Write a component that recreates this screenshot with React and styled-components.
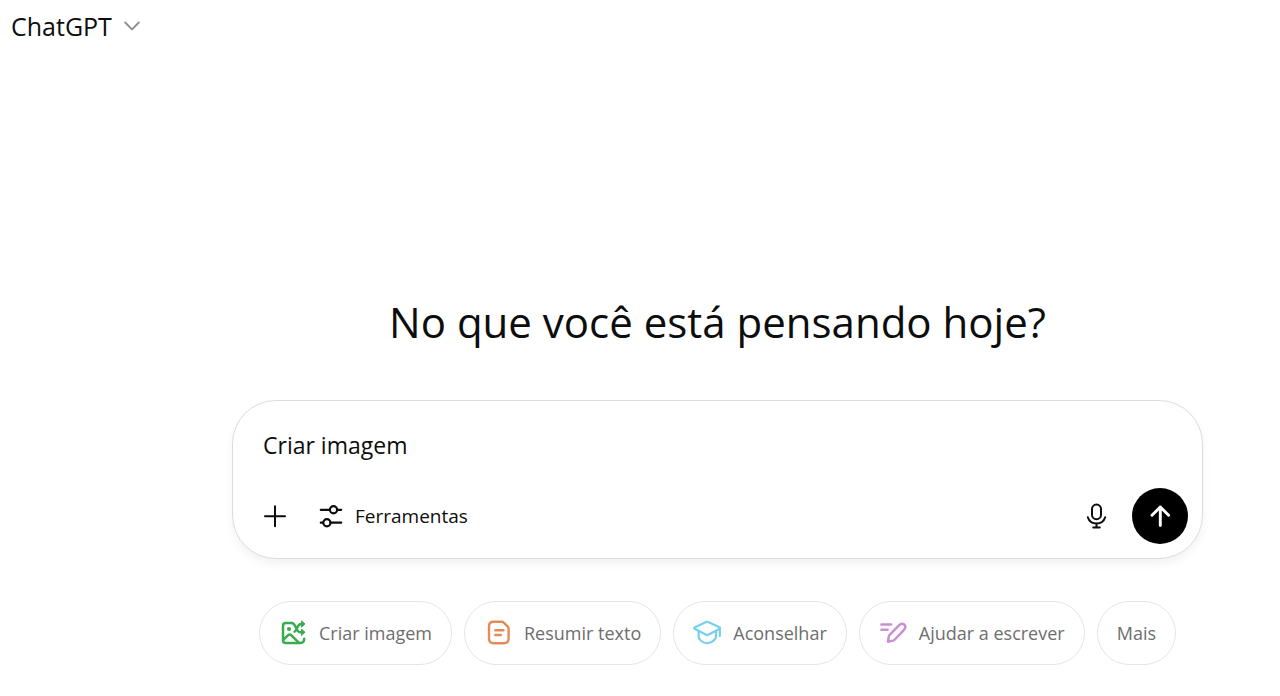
import React, { useState } from "react";
import styled, { createGlobalStyle } from "styled-components";

const GlobalStyle = createGlobalStyle`
  *, *::before, *::after { box-sizing: border-box; }
  body {
    margin: 0;
    background: #fff;
    color: #0d0d0d;
    font-family: "Open Sans", "Noto Sans", sans-serif;
  }
  button, input { font: inherit; color: inherit; }
`;

const Page = styled.div`
  display: flex;
  flex-direction: column;
  min-height: 100vh;
`;

const Header = styled.header`
  display: flex;
  padding: 8px 11px;
`;

const PlainButton = styled.button`
  display: inline-flex;
  align-items: center;
  gap: ${(p) => p.$gap || 0}px;
  padding: 0;
  border: 0;
  background: none;
  font-size: ${(p) => p.$size || 19}px;
  line-height: 36px;
  cursor: pointer;
`;

const Main = styled.main`
  flex: 1;
  display: flex;
  flex-direction: column;
  justify-content: flex-end;
  padding: 0 77px 31px 232px;
`;

const Title = styled.h1`
  margin: 0 0 48px;
  font-size: 42px;
  font-weight: 400;
  line-height: 60px;
  text-align: center;
  white-space: nowrap;
`;

const Composer = styled.form`
  display: flex;
  flex-direction: column;
  gap: 25px;
  padding: 26px 14px 14px 30px;
  border: 1px solid #dcdcdc;
  border-radius: 44px;
  background: #fff;
  box-shadow: 0 5px 10px rgba(0, 0, 0, 0.05);
`;

const Prompt = styled.input`
  width: 100%;
  height: 36px;
  padding: 0;
  border: 0;
  outline: 0;
  background: none;
  font-size: 23px;
`;

const Tools = styled.div`
  display: flex;
  align-items: center;
  gap: ${(p) => p.$gap}px;
`;

const Toolbar = styled(Tools)`
  justify-content: space-between;
`;

const SendButton = styled.button`
  display: grid;
  place-items: center;
  width: 56px;
  height: 56px;
  padding: 0;
  border: 0;
  border-radius: 50%;
  background: #000;
  color: #fff;
  cursor: pointer;
`;

const Suggestions = styled.div`
  display: flex;
  justify-content: center;
  gap: 12px;
  margin-top: 42px;
`;

const Pill = styled.button`
  display: inline-flex;
  align-items: center;
  gap: 12px;
  height: 64px;
  padding: 0 19px;
  border: 1px solid #e5e5e5;
  border-radius: 32px;
  background: #fff;
  color: #6e6e6e;
  font-size: 18px;
  white-space: nowrap;
  cursor: pointer;
`;

const Svg = styled.svg`
  display: block;
  flex: none;
  fill: none;
  stroke: ${(p) => p.$color || "currentColor"};
  stroke-width: ${(p) => p.$weight || 2};
  stroke-linecap: round;
  stroke-linejoin: round;
`;

const Icon = ({ size = 28, width = size, color, weight, children }) => (
  <Svg
    width={width}
    height={size}
    viewBox={`0 0 ${width} ${size}`}
    $color={color}
    $weight={weight}
    aria-hidden="true"
  >
    {children}
  </Svg>
);

const ImageIcon = () => (
  <Icon color="#3bab50" weight={2.5}>
    <path d="M12.5 4H6.8Q4 4 4 6.8V21.2Q4 24 6.8 24H21.5Q25.2 24 25.2 19.8" />
    <path d="M4.5 20.5L9 16.3Q10.7 14.8 12.4 16.3L20 23.8" />
    <path d="M12.5 4C17.5 4 16.5 13.3 21.5 13.3H24.5M15.6 12.6C18.5 11 18 5 22 5H24.5" />
    <path d="M22.8 2L25.8 5L22.8 8ZM22.8 10.3L25.8 13.3L22.8 16.3Z" fill="#3bab50" strokeWidth="1" />
    <circle cx="10" cy="10" r="2.1" fill="#3bab50" stroke="none" />
  </Icon>
);

const DocIcon = () => (
  <Icon color="#e58b57" weight={2.4}>
    <path d="M9.5 2.8H17.5Q19 2.8 20 3.8L23.6 7.3Q24.6 8.3 24.6 9.8V19.5Q24.6 24.2 20 24.2H9.5Q5 24.2 5 19.5V7.4Q5 2.8 9.5 2.8Z" />
    <path d="M11.3 11.2H19.5M11.3 16H16.8" />
  </Icon>
);

const CapIcon = () => (
  <Icon color="#76d0eb" weight={2.2}>
    <path d="M13.2 3Q14.2 2.5 15.2 3L26.4 8.3Q28 9.2 26.4 10.1L15.2 15.8Q14.2 16.3 13.2 15.8L2 10.1Q.4 9.2 2 8.3Z" />
    <path d="M5.6 12.5V17.5C5.6 20.5 9.5 24.2 14.2 24.2S23 20.5 23 17.5V12.5M26.8 9.5V17" />
  </Icon>
);

const PenIcon = () => (
  <Icon color="#ca8fd2" weight={2.5}>
    <path d="M2.4 5.6H12.2M2.4 10.7H8.6" />
    <path d="M9 22.8L9.8 17.6Q10 16.5 10.8 15.7L20 6.3C22.2 4.1 24.3 4.5 25.3 5.6C26.6 6.9 27 9 24.8 11.1L15.8 20.5Q15 21.3 13.9 21.6Z" />
  </Icon>
);

const SUGGESTIONS = [
  { label: "Criar imagem", icon: <ImageIcon /> },
  { label: "Resumir texto", icon: <DocIcon /> },
  { label: "Aconselhar", icon: <CapIcon /> },
  { label: "Ajudar a escrever", icon: <PenIcon /> },
  { label: "Mais" },
];

export default function App() {
  const [prompt, setPrompt] = useState("Criar imagem");
  return (
    <Page>
      <GlobalStyle />
      <Header>
        <PlainButton type="button" $gap={12} $size={25}>
          ChatGPT
          <Icon size={16} color="#8c8c8c" weight={1.8}>
            <path d="M1.2 4.5L8 11.3L14.8 4.5" />
          </Icon>
        </PlainButton>
      </Header>
      <Main>
        <Title>No que você está pensando hoje?</Title>
        <Composer onSubmit={(e) => e.preventDefault()}>
          <Prompt
            aria-label="Mensagem"
            value={prompt}
            onChange={(e) => setPrompt(e.target.value)}
          />
          <Toolbar>
            <Tools $gap={32}>
              <PlainButton type="button" aria-label="Adicionar">
                <Icon size={24}>
                  <path d="M12 2.3V22.3M2 12.3H22" />
                </Icon>
              </PlainButton>
              <PlainButton type="button" $gap={12} $size={19}>
                <Icon size={24} weight={2.2}>
                  <path d="M1.8 5.8H10.6M18 5.8H22.2M1.8 18.7H4M11.4 18.7H22.2" />
                  <circle cx="14.5" cy="5.8" r="3.6" />
                  <circle cx="7.9" cy="18.7" r="3.6" />
                </Icon>
                Ferramentas
              </PlainButton>
            </Tools>
            <Tools $gap={22}>
              <PlainButton type="button" aria-label="Ditar">
                <Icon>
                  <rect x="10" y="2.6" width="9" height="14.6" rx="4.5" />
                  <path d="M5.8 15.3C7 19 10.3 21.6 14.5 21.6S22 19 23.2 15.3M14.5 21.6V25.5M11.2 25.6H17.8" />
                </Icon>
              </PlainButton>
              <SendButton type="submit" aria-label="Enviar">
                <Icon weight={2.9}>
                  <path d="M14.3 23.6V5M6 13.3L14.3 5L22.6 13.3" />
                </Icon>
              </SendButton>
            </Tools>
          </Toolbar>
        </Composer>
        <Suggestions>
          {SUGGESTIONS.map(({ label, icon }) => (
            <Pill key={label} type="button" onClick={() => setPrompt(label)}>
              {icon}
              {label}
            </Pill>
          ))}
        </Suggestions>
      </Main>
    </Page>
  );
}
